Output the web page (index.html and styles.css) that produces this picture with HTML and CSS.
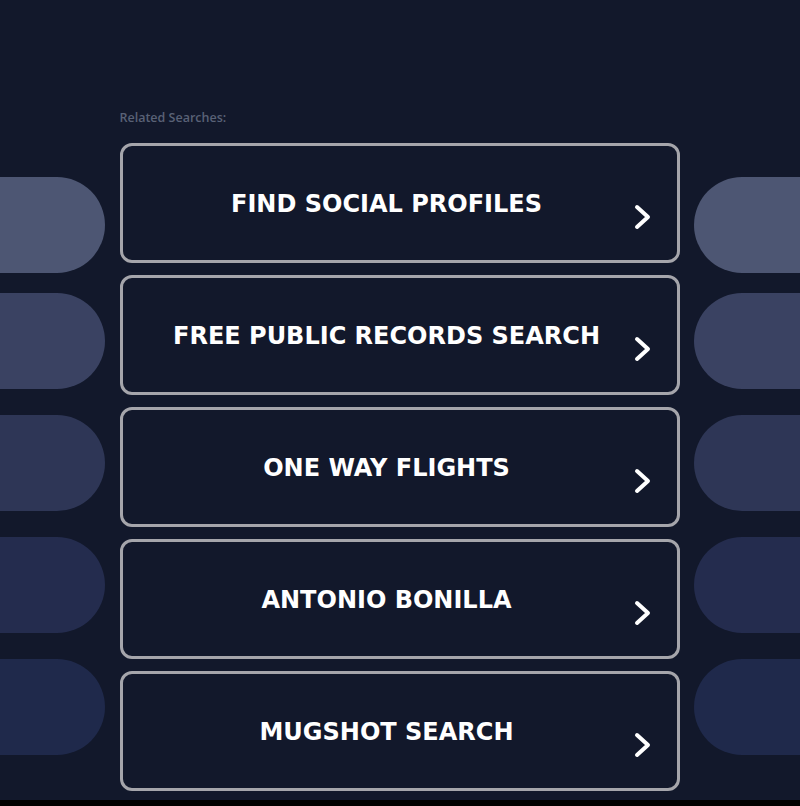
FILE: index.html
```html
<!DOCTYPE html>
<html lang="en">
<head>
    <meta charset="UTF-8"/>
    <meta name="viewport" content="width=device-width, initial-scale=1.0">
    <title>Related Searches</title>
    <link rel="stylesheet" href="styles.css">
</head>

<body>
    <div class="page">
        <aside class="side side-left">
            <div class="pill pill-1"></div>
            <div class="pill pill-2"></div>
            <div class="pill pill-3"></div>
            <div class="pill pill-4"></div>
            <div class="pill pill-5"></div>
        </aside>

        <main class="results">
            <p class="label">Related Searches:</p>
            <ul class="links">
                <li><a href="#" class="link"><span>FIND SOCIAL PROFILES</span>
                    <svg class="chevron" viewBox="0 0 20 28"><path d="M4 4 L15 14 L4 24"/></svg></a></li>
                <li><a href="#" class="link"><span>FREE PUBLIC RECORDS SEARCH</span>
                    <svg class="chevron" viewBox="0 0 20 28"><path d="M4 4 L15 14 L4 24"/></svg></a></li>
                <li><a href="#" class="link"><span>ONE WAY FLIGHTS</span>
                    <svg class="chevron" viewBox="0 0 20 28"><path d="M4 4 L15 14 L4 24"/></svg></a></li>
                <li><a href="#" class="link"><span>ANTONIO BONILLA</span>
                    <svg class="chevron" viewBox="0 0 20 28"><path d="M4 4 L15 14 L4 24"/></svg></a></li>
                <li><a href="#" class="link"><span>MUGSHOT SEARCH</span>
                    <svg class="chevron" viewBox="0 0 20 28"><path d="M4 4 L15 14 L4 24"/></svg></a></li>
            </ul>
        </main>

        <aside class="side side-right">
            <div class="pill pill-1"></div>
            <div class="pill pill-2"></div>
            <div class="pill pill-3"></div>
            <div class="pill pill-4"></div>
            <div class="pill pill-5"></div>
        </aside>
    </div>
</body>
</html>
```

FILE: styles.css
```css
* {
margin: 0;
padding: 0;
box-sizing: border-box;
}

html {
    background-color: #000;
}

body {
    font-family: 'DejaVu Sans', Verdana, sans-serif;
    color: #fff;
}

.page {
    height: 800px;
    background-color: #12182b;
    display: grid;
    grid-template-columns: 105px 560px 106px;
    justify-content: space-between;
    overflow: hidden;
}

.side {
    display: flex;
    flex-direction: column;
    gap: 26px;
    padding-top: 177px;
}

.pill {
    height: 96px;
}

.side-left .pill {
    border-radius: 0 48px 48px 0;
}

.side-right .pill {
    border-radius: 48px 0 0 48px;
}

.side-left .pill-2,
.side-right .pill-2 {
    margin-top: -6px;
}

.pill-1 {
    background-color: #4d5673;
}

.pill-2 {
    background-color: #3a4262;
}

.pill-3 {
    background-color: #2e3656;
}

.pill-4 {
    background-color: #242c4e;
}

.pill-5 {
    background-color: #1f294b;
}

.results {
    padding-top: 110px;
}

.label {
    font-family: 'Open Sans', sans-serif;
    font-size: 12.5px;
    font-weight: 600;
    color: #596176;
    line-height: 16px;
    margin-bottom: 17px;
}

.links {
    list-style: none;
    display: flex;
    flex-direction: column;
    gap: 12px;
}

.link {
    position: relative;
    display: flex;
    align-items: center;
    justify-content: center;
    height: 120px;
    border: 3px solid #a5a5ab;
    border-radius: 12px;
    padding-right: 26px;
    color: #fff;
    text-decoration: none;
    font-size: 24px;
    font-weight: bold;
}

.link span {
    margin-top: 2px;
}

.chevron {
    position: absolute;
    right: 24px;
    top: 57px;
    width: 20px;
    height: 28px;
    fill: none;
    stroke: #fff;
    stroke-width: 4;
    stroke-linecap: round;
    stroke-linejoin: round;
}
```
